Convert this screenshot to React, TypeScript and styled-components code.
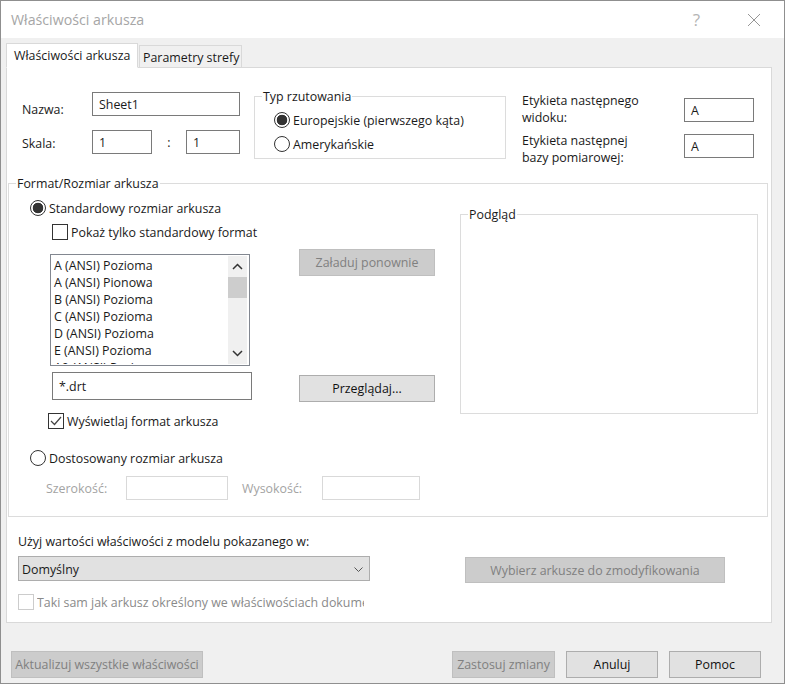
import styled, { createGlobalStyle } from 'styled-components';

const FONT = `'Open Sans', 'Noto Sans', sans-serif`;

const GlobalStyle = createGlobalStyle`
	* {
		box-sizing: border-box;
	}
	body {
		margin: 0;
		overflow: hidden;
		font-family: ${FONT};
		font-size: 12.4px;
		color: #1a1a1a;
	}
`;

const Window = styled.div`
	width: 785px;
	height: 684px;
	display: flex;
	flex-direction: column;
	background-color: #f0f0f0;
	border: 1px solid #8f8f8f;
`;

const TitleBar = styled.div`
	height: 37px;
	flex: none;
	display: flex;
	align-items: center;
	padding: 0 23px 0 10px;
	background-color: #fff;
`;

const Title = styled.div`
	flex: 1;
	font-size: 14.2px;
	color: #a6a6a6;
`;

const HelpGlyph = styled.span`
	font-size: 17px;
	color: #b4b4b4;
	margin-right: 47px;
`;

const Tabs = styled.div`
	height: 30px;
	flex: none;
	display: flex;
	align-items: flex-end;
	padding-left: 5px;
	margin-bottom: -1px;
`;

const Tab = styled.div<{ $active?: boolean }>`
	position: relative;
	z-index: ${(p) => (p.$active ? 1 : 0)};
	height: ${(p) => (p.$active ? '25px' : '23px')};
	margin-left: ${(p) => (p.$active ? '0' : '1px')};
	padding: ${(p) => (p.$active ? '3px 0 0 7px' : '3px 0 0 3px')};
	width: ${(p) => (p.$active ? '132px' : '103px')};
	white-space: nowrap;
	background-color: ${(p) => (p.$active ? '#fff' : '#f0f0f0')};
	border: 1px solid #d9d9d9;
	border-bottom-color: ${(p) => (p.$active ? '#fff' : '#d9d9d9')};
`;

const Panel = styled.div`
	width: 766px;
	height: 556px;
	flex: none;
	margin-left: 5px;
	background-color: #fff;
	border: 1px solid #d9d9d9;
`;

const TopRow = styled.div`
	height: 106px;
	display: flex;
	align-items: flex-start;
	padding: 19px 0 0 15px;
`;

const NameGrid = styled.div`
	width: 218px;
	margin: 5px 14px 0 0;
	display: flex;
	flex-direction: column;
	gap: 14px;
`;

const NameRow = styled.div`
	height: 24px;
	display: flex;
	align-items: flex-start;
`;

const RowLabel = styled.span<{ $drop: number }>`
	width: 70px;
	margin-top: ${(p) => p.$drop}px;
`;

const Colon = styled.span`
	width: 34px;
	margin-top: 4px;
	text-align: center;
`;

const TextBox = styled.div<{ $w: number; $h?: number; $off?: number; $muted?: boolean }>`
	width: ${(p) => p.$w}px;
	height: ${(p) => p.$h ?? 24}px;
	margin-top: ${(p) => p.$off ?? 0}px;
	flex: none;
	padding: 0 6px;
	display: flex;
	align-items: center;
	background-color: #fff;
	border: 1px solid ${(p) => (p.$muted ? '#d9d9d9' : '#7a7a7a')};
`;

const Group = styled.fieldset<{ $w: number; $h: number }>`
	width: ${(p) => p.$w}px;
	height: ${(p) => p.$h}px;
	flex: none;
	margin: 0;
	padding: 0;
	min-width: 0;
	border: 1px solid #dcdcdc;
`;

const GroupTitle = styled.legend`
	margin-left: 7px;
	padding: 2px 1px 0;
	line-height: 16px;
`;

const ProjectionList = styled.div`
	padding: 7px 0 0 19px;
	display: flex;
	flex-direction: column;
	gap: 8px;
`;

const OptionRow = styled.div<{ $left?: number; $top?: number }>`
	display: flex;
	align-items: center;
	height: 16px;
	margin-left: ${(p) => p.$left ?? 0}px;
	margin-top: ${(p) => p.$top ?? 0}px;
	gap: 3px;
	white-space: nowrap;
`;

const Radio = styled.span<{ $checked?: boolean }>`
	width: 16px;
	height: 16px;
	flex: none;
	border-radius: 50%;
	border: 1px solid #333;
	background: ${(p) => (p.$checked ? 'radial-gradient(circle, #333 0 5px, #fff 5.6px)' : '#fff')};
`;

const CheckBox = styled.span<{ $muted?: boolean }>`
	width: 16px;
	height: 16px;
	flex: none;
	display: flex;
	align-items: center;
	justify-content: center;
	background-color: #fff;
	border: 1px solid ${(p) => (p.$muted ? '#cccccc' : '#333')};
`;

const LabelsGrid = styled.div`
	margin: 5px 0 0 16px;
	display: grid;
	grid-template-columns: 162px 70px;
	grid-auto-rows: 34px;
	row-gap: 6px;
	line-height: 17px;
`;

const FormatGroup = styled(Group)`
	margin-left: 1px;
`;

const FormatTop = styled.div`
	display: flex;
	height: 237px;
	padding-top: 8px;
`;

const LeftColumn = styled.div`
	width: 290px;
	flex: none;
	padding-left: 21px;
	display: flex;
	flex-direction: column;
`;

const ListBox = styled.div`
	width: 200px;
	height: 112px;
	margin: 14px 0 6px 20px;
	flex: none;
	display: flex;
	justify-content: space-between;
	padding: 1px 2px 1px 1px;
	background-color: #fff;
	border: 1px solid #828790;
	overflow: hidden;
`;

const ListItems = styled.div`
	padding: 1px 0 0 2px;
	line-height: 17px;
	white-space: nowrap;
	overflow: hidden;
`;

const ScrollBar = styled.div`
	width: 19px;
	flex: none;
	display: flex;
	flex-direction: column;
	align-items: center;
	background-color: #f0f0f0;
`;

const ScrollEnd = styled.div`
	height: 21px;
	flex: none;
	display: flex;
	align-items: center;
	justify-content: center;
`;

const ScrollThumb = styled.div`
	width: 100%;
	height: 21px;
	flex: none;
	background-color: #cdcdcd;
`;

const ScrollTrack = styled.div`
	flex: 1;
`;

const FilterBox = styled(TextBox)`
	margin-left: 22px;
`;

const MiddleColumn = styled.div`
	width: 136px;
	flex: none;
	display: flex;
	flex-direction: column;
	padding-top: 49px;
`;

const PushButton = styled.div<{ $w: number; $disabled?: boolean; $h?: number }>`
	width: ${(p) => p.$w}px;
	height: ${(p) => p.$h ?? 27}px;
	flex: none;
	display: flex;
	align-items: center;
	justify-content: center;
	white-space: nowrap;
	color: ${(p) => (p.$disabled ? '#808080' : '#111')};
	background-color: ${(p) => (p.$disabled ? '#cccccc' : '#e1e1e1')};
	border: 1px solid ${(p) => (p.$disabled ? '#bfbfbf' : '#adadad')};
`;

const BrowseButton = styled(PushButton)`
	margin-top: 99px;
`;

const PreviewGroup = styled(Group)`
	margin: 5px 0 0 25px;
`;

const SizeRow = styled.div`
	display: flex;
	align-items: center;
	margin: 10px 0 0 16px;
	color: #a3a3a3;
`;

const SizeLabel = styled.span<{ $w: number; $gap?: number }>`
	width: ${(p) => p.$w}px;
	margin-left: ${(p) => p.$gap ?? 0}px;
	flex: none;
`;

const SizeBlock = styled.div`
	padding: 21px 0 0 21px;
`;

const BottomRow = styled.div`
	display: flex;
	padding: 16px 0 0 11px;
`;

const ModelColumn = styled.div`
	width: 352px;
	flex: none;
	line-height: 17px;
`;

const ModelSelect = styled.div`
	height: 25px;
	margin-top: 6px;
	padding: 1px 5px 0 3px;
	display: flex;
	align-items: center;
	justify-content: space-between;
	background-color: #e1e1e1;
	border: 1px solid #adadad;
`;

const SameSheet = styled(OptionRow)`
	margin-top: 13px;
	color: #8a8a8a;
`;

const ClippedText = styled.span`
	width: 327px;
	overflow: hidden;
`;

const SheetsButton = styled(PushButton)`
	margin: 24px 0 0 95px;
`;

const Footer = styled.div`
	display: flex;
	gap: 11px;
	padding: 28px 23px 0 10px;
`;

const FooterSpacer = styled.div`
	flex: 1;
`;

const ScrollChevron = ({ up }: { up?: boolean }) => (
	<svg width={11} height={7} viewBox='0 0 11 7' fill='none'>
		<path d={up ? 'M1 6L5.5 1.5L10 6' : 'M1 1L5.5 5.5L10 1'} stroke='#333' strokeWidth={1.5} />
	</svg>
);

const SHEET_FORMATS = ['A (ANSI) Pozioma', 'A (ANSI) Pionowa', 'B (ANSI) Pozioma', 'C (ANSI) Pozioma', 'D (ANSI) Pozioma', 'E (ANSI) Pozioma', 'A0 (ANSI) Pozioma'];

export default function App() {
	return (
		<Window>
			<GlobalStyle />
			<TitleBar>
				<Title>Właściwości arkusza</Title>
				<HelpGlyph>?</HelpGlyph>
				<svg width='14' height='14' viewBox='0 0 14 14' fill='none'>
					<path d='M1 1L13 13M13 1L1 13' stroke='#8a8a8a' strokeWidth='0.9' />
				</svg>
			</TitleBar>
			<Tabs>
				<Tab $active>Właściwości arkusza</Tab>
				<Tab>Parametry strefy</Tab>
			</Tabs>
			<Panel>
				<TopRow>
					<NameGrid>
						<NameRow>
							<RowLabel $drop={9}>Nazwa:</RowLabel>
							<TextBox $w={148}>Sheet1</TextBox>
						</NameRow>
						<NameRow>
							<RowLabel $drop={5}>Skala:</RowLabel>
							<TextBox $w={60}>1</TextBox>
							<Colon>:</Colon>
							<TextBox $w={54}>1</TextBox>
						</NameRow>
					</NameGrid>
					<Group $w={252} $h={72}>
						<GroupTitle>Typ rzutowania</GroupTitle>
						<ProjectionList>
							<OptionRow>
								<Radio $checked />
								Europejskie (pierwszego kąta)
							</OptionRow>
							<OptionRow>
								<Radio />
								Amerykańskie
							</OptionRow>
						</ProjectionList>
					</Group>
					<LabelsGrid>
						<span>
							Etykieta następnego
							<br />
							widoku:
						</span>
						<TextBox $w={70} $off={6}>
							A
						</TextBox>
						<span>
							Etykieta następnej
							<br />
							bazy pomiarowej:
						</span>
						<TextBox $w={70} $off={2}>
							A
						</TextBox>
					</LabelsGrid>
				</TopRow>
				<FormatGroup $w={760} $h={343}>
					<GroupTitle>Format/Rozmiar arkusza</GroupTitle>
					<FormatTop>
						<LeftColumn>
							<OptionRow>
								<Radio $checked />
								Standardowy rozmiar arkusza
							</OptionRow>
							<OptionRow $left={22} $top={8}>
								<CheckBox />
								Pokaż tylko standardowy format
							</OptionRow>
							<ListBox>
								<ListItems>
									{SHEET_FORMATS.map((item) => (
										<div key={item}>{item}</div>
									))}
								</ListItems>
								<ScrollBar>
									<ScrollEnd>
										<ScrollChevron up />
									</ScrollEnd>
									<ScrollThumb />
									<ScrollTrack />
									<ScrollEnd>
										<ScrollChevron />
									</ScrollEnd>
								</ScrollBar>
							</ListBox>
							<FilterBox $w={200} $h={28}>
								*.drt
							</FilterBox>
							<OptionRow $left={18} $top={13}>
								<CheckBox>
									<svg width='12' height='10' viewBox='0 0 12 10' fill='none'>
										<path d='M1 5L4.5 8.5L11 1' stroke='#444' strokeWidth='1.2' />
									</svg>
								</CheckBox>
								Wyświetlaj format arkusza
							</OptionRow>
						</LeftColumn>
						<MiddleColumn>
							<PushButton $w={136} $disabled>
								Załaduj ponownie
							</PushButton>
							<BrowseButton $w={136}>Przeglądaj...</BrowseButton>
						</MiddleColumn>
						<PreviewGroup $w={298} $h={209}>
							<GroupTitle>Podgląd</GroupTitle>
						</PreviewGroup>
					</FormatTop>
					<SizeBlock>
						<OptionRow>
							<Radio />
							Dostosowany rozmiar arkusza
						</OptionRow>
						<SizeRow>
							<SizeLabel $w={80}>Szerokość:</SizeLabel>
							<TextBox $w={102} $muted />
							<SizeLabel $w={80} $gap={14}>
								Wysokość:
							</SizeLabel>
							<TextBox $w={98} $muted />
						</SizeRow>
					</SizeBlock>
				</FormatGroup>
				<BottomRow>
					<ModelColumn>
						Użyj wartości właściwości z modelu pokazanego w:
						<ModelSelect>
							Domyślny
							<svg width={11} height={7} viewBox='0 0 11 7' fill='none'>
								<path d='M1.5 1.5L5.5 5.5L9.5 1.5' stroke='#555' strokeWidth={1} />
							</svg>
						</ModelSelect>
						<SameSheet>
							<CheckBox $muted />
							<ClippedText>Taki sam jak arkusz określony we właściwościach dokumentu</ClippedText>
						</SameSheet>
					</ModelColumn>
					<SheetsButton $w={260} $h={26} $disabled>
						Wybierz arkusze do zmodyfikowania
					</SheetsButton>
				</BottomRow>
			</Panel>
			<Footer>
				<PushButton $w={192} $disabled>
					Aktualizuj wszystkie właściwości
				</PushButton>
				<FooterSpacer />
				<PushButton $w={103} $disabled>
					Zastosuj zmiany
				</PushButton>
				<PushButton $w={92}>Anuluj</PushButton>
				<PushButton $w={92}>Pomoc</PushButton>
			</Footer>
		</Window>
	);
}
